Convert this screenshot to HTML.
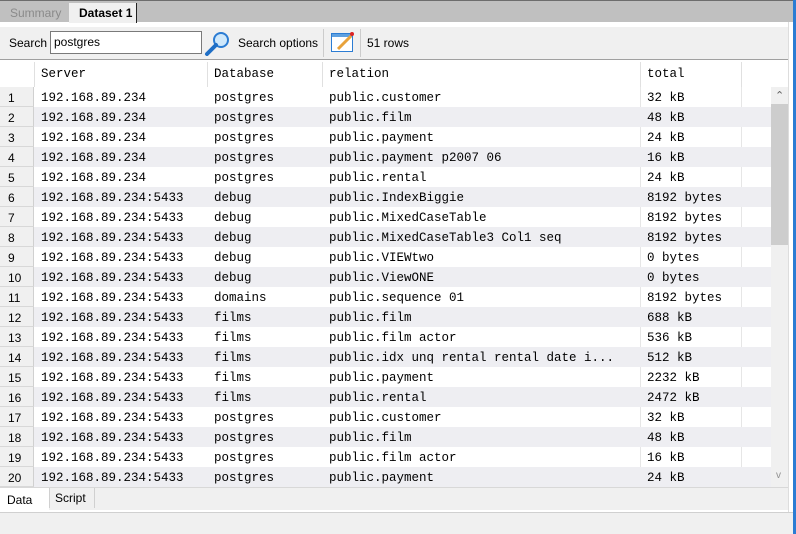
<!DOCTYPE html>
<html><head><style>
*{margin:0;padding:0;box-sizing:border-box}
body{width:796px;height:534px;background:#fff;position:relative;overflow:hidden;font-family:"Liberation Sans",sans-serif;font-size:12px;color:#000}
.abs{position:absolute}
.mono{font-family:"Liberation Mono",monospace;font-size:12.5px}
.row{position:absolute;left:0;height:20px;width:771px}
.row span{position:absolute;top:4px;white-space:pre}
.rn{position:absolute;left:0;width:34px;height:20px;background:#f0f0f0;border-right:1px solid #d0d0d0;border-bottom:1px solid #d8d8d8;font-family:"Liberation Sans",sans-serif;font-size:12px;padding:4px 0 0 8px}
</style></head><body>
<div class="abs" style="left:0;top:0;width:796px;height:22px;background:#c0c0c0;border-top:1px solid #6d6d6d"></div>
<div class="abs" style="left:10px;top:6px;color:#8a8a8a">Summary</div>
<div class="abs" style="left:69px;top:3px;width:68px;height:20px;background:#f0f0f0;border-right:1px solid #222;font-weight:bold;padding:3px 0 0 10px">Dataset 1</div>
<div class="abs" style="left:793px;top:0;width:3px;height:534px;background:#2b7cd3"></div>
<div class="abs" style="left:788px;top:22px;width:1px;height:490px;background:#ddd"></div>
<div class="abs" style="left:0;top:27px;width:788px;height:33px;background:#f0f0f0;border-bottom:1px solid #a0a0a0"></div>
<div class="abs" style="left:9px;top:36px">Search</div>
<div class="abs" style="left:50px;top:31px;width:152px;height:23px;background:#fff;border:1px solid #7a7a7a;padding:3px 0 0 3px">postgres</div>
<svg class="abs" style="left:204px;top:30px" width="28" height="26"><circle cx="17" cy="10" r="7" fill="#cfe8fb" stroke="#2b7cd3" stroke-width="2"/><line x1="12" y1="15" x2="3" y2="24" stroke="#1f6fc6" stroke-width="4" stroke-linecap="round"/></svg>
<div class="abs" style="left:238px;top:36px">Search options</div>
<div class="abs" style="left:323px;top:29px;width:1px;height:28px;background:#ccc"></div>
<svg class="abs" style="left:330px;top:30px" width="26" height="24"><rect x="1.5" y="3.5" width="21" height="18" fill="#fff" stroke="#2b7cd3"/><rect x="2" y="4" width="20" height="3" fill="#5ea0e0"/><line x1="8" y1="19" x2="21" y2="6" stroke="#e8a23a" stroke-width="3"/><circle cx="22" cy="4" r="2" fill="#d22"/></svg>
<div class="abs" style="left:360px;top:29px;width:1px;height:28px;background:#ccc"></div>
<div class="abs" style="left:367px;top:36px">51 rows</div>
<div class="abs" style="left:0;top:62px;width:771px;height:25px;background:#fff"></div>
<div class="abs" style="left:34px;top:62px;width:1px;height:25px;background:#e0e0e0"></div>
<div class="abs" style="left:207px;top:62px;width:1px;height:25px;background:#e0e0e0"></div>
<div class="abs" style="left:322px;top:62px;width:1px;height:25px;background:#e0e0e0"></div>
<div class="abs" style="left:640px;top:62px;width:1px;height:25px;background:#e0e0e0"></div>
<div class="abs" style="left:741px;top:62px;width:1px;height:45px;background:#e0e0e0"></div>
<div class="abs mono" style="left:41px;top:67px">Server</div>
<div class="abs mono" style="left:214px;top:67px">Database</div>
<div class="abs mono" style="left:329px;top:67px">relation</div>
<div class="abs mono" style="left:647px;top:67px">total</div>
<div id="rows"></div>
<div class="abs" style="left:771px;top:87px;width:17px;height:400px;background:#f0f0f0"></div>
<div class="abs" style="left:771px;top:104px;width:17px;height:141px;background:#cdcdcd"></div>
<div class="abs" style="left:775px;top:89px;color:#606060;font-size:11px">&#8963;</div>
<div class="abs" style="left:776px;top:470px;color:#909090;font-size:10px">v</div>
<div class="abs" style="left:0;top:487px;width:788px;height:23px;background:#f0f0f0;border-top:1px solid #d8d8d8"></div>
<div class="abs" style="left:0;top:488px;width:49px;height:22px;background:#fff"></div>
<div class="abs" style="left:7px;top:493px">Data</div>
<div class="abs" style="left:49px;top:488px;width:46px;height:20px;border-right:1px solid #d0d0d0;border-left:1px solid #d0d0d0"></div>
<div class="abs" style="left:55px;top:491px">Script</div>
<div class="abs" style="left:0;top:512px;width:793px;height:22px;background:#f0f0f0;border-top:1px solid #d0d0d0"></div>
<script>
var d=[["192.168.89.234","postgres","public.customer","32 kB"],["192.168.89.234","postgres","public.film","48 kB"],["192.168.89.234","postgres","public.payment","24 kB"],["192.168.89.234","postgres","public.payment p2007 06","16 kB"],["192.168.89.234","postgres","public.rental","24 kB"],["192.168.89.234:5433","debug","public.IndexBiggie","8192 bytes"],["192.168.89.234:5433","debug","public.MixedCaseTable","8192 bytes"],["192.168.89.234:5433","debug","public.MixedCaseTable3 Col1 seq","8192 bytes"],["192.168.89.234:5433","debug","public.VIEWtwo","0 bytes"],["192.168.89.234:5433","debug","public.ViewONE","0 bytes"],["192.168.89.234:5433","domains","public.sequence 01","8192 bytes"],["192.168.89.234:5433","films","public.film","688 kB"],["192.168.89.234:5433","films","public.film actor","536 kB"],["192.168.89.234:5433","films","public.idx unq rental rental date i...","512 kB"],["192.168.89.234:5433","films","public.payment","2232 kB"],["192.168.89.234:5433","films","public.rental","2472 kB"],["192.168.89.234:5433","postgres","public.customer","32 kB"],["192.168.89.234:5433","postgres","public.film","48 kB"],["192.168.89.234:5433","postgres","public.film actor","16 kB"],["192.168.89.234:5433","postgres","public.payment","24 kB"]];
var h="";d.forEach(function(r,i){var y=87+i*20;var bg=i%2?"#eeeef2":"#fff";
h+='<div class="row mono" style="top:'+y+'px;background:'+bg+'"><div class="rn">'+(i+1)+'</div><span style="left:41px">'+r[0]+'</span><span style="left:214px">'+r[1]+'</span><span style="left:329px">'+r[2]+'</span><span style="left:647px">'+r[3]+'</span>'+(i%2?'':'<div style="position:absolute;left:640px;top:0;width:1px;height:20px;background:#e6e6e6"></div><div style="position:absolute;left:741px;top:0;width:1px;height:20px;background:#e6e6e6"></div>')+'</div>';});
document.getElementById("rows").innerHTML=h;
</script>
</body></html>
